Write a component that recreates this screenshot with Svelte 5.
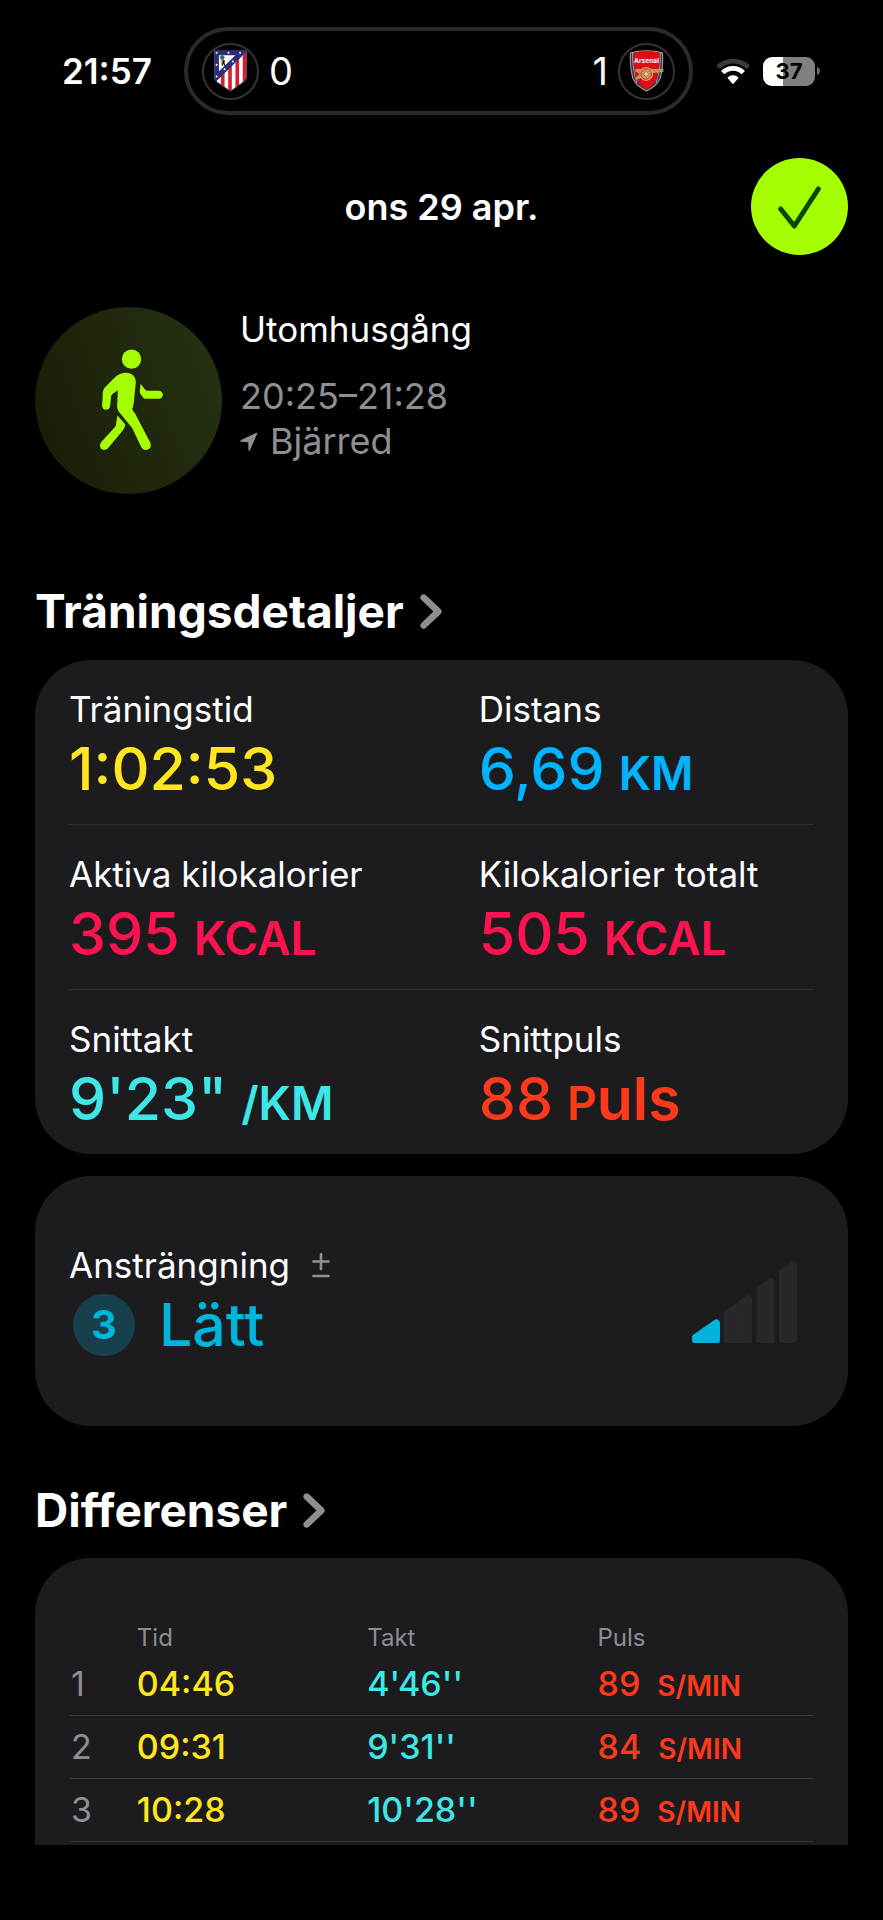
<script>
  const metrics = [
    { label: 'Träningstid', value: '1:02:53', tone: 'yellow' },
    { label: 'Distans', value: '6,69', unit: 'KM', tone: 'blue' },
    { label: 'Aktiva kilokalorier', value: '395', unit: 'KCAL', tone: 'pink' },
    { label: 'Kilokalorier totalt', value: '505', unit: 'KCAL', tone: 'pink' },
    { label: 'Snittakt', value: '9\'23"', unit: '/KM', tone: 'cyan' },
    { label: 'Snittpuls', value: '88', unit: 'P', unitTail: 'uls', tone: 'red' }
  ];
  const rows = [metrics.slice(0, 2), metrics.slice(2, 4), metrics.slice(4, 6)];

  const splits = [
    { n: 1, time: '04:46', pace: "4'46''", pulse: 89 },
    { n: 2, time: '09:31', pace: "9'31''", pulse: 84 },
    { n: 3, time: '10:28', pace: "10'28''", pulse: 89 }
  ];
</script>

{#snippet chevron()}
  <svg class="chevron" viewBox="0 0 66 106" aria-hidden="true">
    <path d="M11 11 L55 53 L11 95" fill="none" stroke="#8e8e93" stroke-width="20" stroke-linecap="round" stroke-linejoin="round" />
  </svg>
{/snippet}

<div class="screen">
  <div class="status">
    <span class="clock">21:57</span>
    <div class="island">
      <span class="team">
        <svg class="crest" viewBox="0 0 106 126" role="img" aria-label="Atlético Madrid">
          <defs>
            <clipPath id="atm"><path d="M4 1 H102 V84 Q100 92 92 97 L53 125 L12 97 Q4 92 4 84 Z" /></clipPath>
          </defs>
          <g clip-path="url(#atm)">
            <rect width="106" height="126" fill="#fff" />
            <g fill="#d7202c">
              <rect x="24" y="20" width="11" height="106" />
              <rect x="46" y="20" width="11" height="106" />
              <rect x="68" y="20" width="11" height="106" />
              <rect x="90" y="0" width="12" height="126" />
            </g>
            <path d="M0 0 H106 L8 96 H0 Z" fill="#2b2f77" />
            <path d="M18 15 H68 L18 64 Z" fill="#fff" />
            <circle cx="28" cy="22" r="7" fill="#1d7a4a" />
            <path d="M26 26 h3 v20 h-3 Z" fill="#6b4a2a" />
            <path d="M30 29 l6 2 l-1 8 l3 8 h-4 l-3 -6 l-2 6 h-2 l2 -12 Z" fill="#15151c" />
            <g fill="#fff">
              <circle cx="11" cy="8" r="3" /><circle cx="47" cy="8" r="3" /><circle cx="82" cy="8" r="3" />
              <circle cx="11" cy="44" r="3" /><circle cx="11" cy="80" r="3" />
              <circle cx="60" cy="34" r="3" /><circle cx="35" cy="58" r="3" />
            </g>
            <path d="M4 1 H102 V84 Q100 92 92 97 L53 125 L12 97 Q4 92 4 84 Z" fill="none" stroke="#2b2f77" stroke-width="4" />
          </g>
        </svg>
      </span>
      <span class="score">0</span>
      <span class="score right">1</span>
      <span class="team">
        <svg class="crest" viewBox="0 0 106 126" role="img" aria-label="Arsenal">
          <path d="M3 7 Q53 -6 103 7 Q106 50 96 86 Q84 112 53 125 Q22 112 10 86 Q0 50 3 7 Z" fill="#c9a466" />
          <path d="M6 9 Q53 -3 100 9 Q103 50 93 85 Q82 109 53 121 Q24 109 13 85 Q3 50 6 9 Z" fill="#1c3a70" />
          <path d="M11 8 Q10 60 24 98 M95 8 Q96 60 82 98" fill="none" stroke="#e8e2dc" stroke-width="2" />
          <path d="M14 8 Q53 -3 92 8 Q95 50 86 84 Q76 106 53 119 Q30 106 20 84 Q11 50 14 8 Z" fill="#e20a17" />
          <text x="53" y="38" text-anchor="middle" font-size="20" font-weight="700" fill="#fff">Arsenal</text>
          <path d="M20 56 L40 58 L104 56 V66 L70 70 L22 90 L18 84 L34 72 L18 64 Z" fill="#b39a5b" />
          <circle cx="52" cy="72" r="21" fill="#c6ab6a" />
          <circle cx="52" cy="72" r="16" fill="none" stroke="#d2332c" stroke-width="3" />
          <path d="M52 56 V88 M36 72 H68 M41 61 L63 83 M63 61 L41 83" stroke="#d2332c" stroke-width="2" />
          <circle cx="52" cy="72" r="5" fill="#e9d7a6" />
        </svg>
      </span>
    </div>
    <div class="indicators">
      <svg class="wifi" viewBox="0 0 102 78" role="img" aria-label="Wi-Fi">
        <path d="M5 28 A66 66 0 0 1 97 28" fill="none" stroke="#3a3a3a" stroke-width="14" />
        <path d="M20 44 A44 44 0 0 1 82 44" fill="none" stroke="#fff" stroke-width="14" />
        <path d="M34 59 A24 24 0 0 1 68 59 L54 76 Q51 79 48 76 Z" fill="#fff" />
      </svg>
      <span class="battery">37</span>
      <svg class="nub" viewBox="0 0 3 8" aria-hidden="true"><path d="M0 0 Q3 1 3 4 Q3 7 0 8 Z" fill="#6c6c6c" /></svg>
    </div>
  </div>

  <header class="top">
    <h1>ons 29 apr.</h1>
    <button class="done" aria-label="Klar">
      <svg viewBox="0 0 291 291" aria-hidden="true">
        <path d="M89 153 L130 204 L202 93" fill="none" stroke="#044a04" stroke-width="15" stroke-linecap="round" stroke-linejoin="round" />
      </svg>
    </button>
  </header>

  <main>
    <section class="workout">
      <div class="badge">
        <svg viewBox="45 52 560 560" role="img" aria-label="Gång">
          <g fill="#a6ff00">
            <circle cx="334" cy="208" r="29" />
            <path d="M318 249 C335 249 347 260 347 277 L341 335 C340 345 339 352 336 357 C337 362 341 366 345 372 L390 458 C394 467 391 476 383 479 C375 482 367 479 363 471 L336 414 L298 368 C293 362 291 356 291 348 L293 301 L279 311 C274 315 272 320 272 328 L270 348 C269 355 265 360 258 360 C251 360 246 355 246 347 L248 312 C248 303 251 296 257 290 L283 264 C293 254 305 249 318 249 Z" />
            <path d="M361 282 L374 298 C377 301 380 303 385 303 L415 303 C422 303 428 308 428 315 C428 322 422 327 415 327 L379 327 C374 327 371 326 368 322 L360 311 C359 309 359 307 359 304 Z" />
            <path d="M292 377 L315 403 C315 410 313 414 309 420 L264 474 C259 480 250 482 244 477 C238 472 238 463 243 457 L284 412 C287 408 288 404 288 400 Z" />
          </g>
        </svg>
      </div>
      <div class="about">
        <p class="kind">Utomhusgång</p>
        <p class="muted">20:25–21:28</p>
        <p class="muted place">
          <svg viewBox="0 0 56 60" aria-hidden="true">
            <path d="M54 3 Q55 1 52 1 L3 24 Q-1 27 3 29 L24 31 Q26 31 26 33 L26 55 Q28 60 31 56 Z" fill="#8e8e93" />
          </svg>
          Bjärred
        </p>
      </div>
    </section>

    <h2 class="first"><a href="#detaljer">Träningsdetaljer {@render chevron()}</a></h2>
    <section class="card" id="detaljer">
      {#each rows as row}
        <div class="row">
          {#each row as m}
            <div>
              <p class="label">{m.label}</p>
              <p class="value {m.tone}">
                {m.value}{#if m.unit}<span class="unit">{m.unit}</span>{/if}{#if m.unitTail}<span class="tail">{m.unitTail}</span>{/if}
              </p>
            </div>
          {/each}
        </div>
      {/each}
    </section>

    <section class="card effort">
      <div>
        <p class="label">
          Ansträngning
          <svg class="plusminus" viewBox="0 0 54 76" aria-hidden="true">
            <path d="M4 26 H50 M27 4 V49 M4 70 H50" stroke="#8e8e93" stroke-width="8" stroke-linecap="round" />
          </svg>
        </p>
        <p class="value level"><span class="num">3</span>Lätt</p>
      </div>
      <svg class="bars" viewBox="756 840 318 246" role="img" aria-label="Ansträngningsnivå">
        <g stroke-width="16" stroke-linejoin="round">
          <path d="M764 1068 L829 1023 L832 1026 V1078 H764 Z" fill="#00b4dc" stroke="#00b4dc" />
          <g fill="#28282c" stroke="#28282c">
            <path d="M860 997 L925 950 L928 953 V1078 H860 Z" />
            <path d="M957 924 L993 900 L996 903 V1078 H957 Z" />
            <path d="M1025 874 L1061 849 L1064 852 V1078 H1025 Z" />
          </g>
        </g>
      </svg>
    </section>

    <h2><a href="#differenser">Differenser {@render chevron()}</a></h2>
    <section class="card splits" id="differenser">
      <table>
        <thead>
          <tr><td class="idx"></td><th scope="col">Tid</th><th scope="col">Takt</th><th scope="col" class="last">Puls</th></tr>
        </thead>
        <tbody>
          {#each splits as s}
            <tr>
              <th scope="row">{s.n}</th>
              <td class="yellow">{s.time}</td>
              <td class="cyan">{s.pace}</td>
              <td class="red">{s.pulse}<span class="small-unit">S/MIN</span></td>
            </tr>
          {/each}
        </tbody>
      </table>
    </section>
  </main>
</div>

<style>
  :global(body) { background: #000; }
  .screen {
    font-family: Inter, "Liberation Sans", sans-serif;
    color: #fff;
    background: #000;
    padding: 27px 0 75px;
  }
  p, h1, h2 { margin: 0; font-weight: 400; }
  svg { display: block; flex: none; }

  .status {
    display: grid;
    grid-template-columns: 184px 1fr 190px;
    align-items: center;
  }
  .clock { padding-left: 62px; font-size: 35px; font-weight: 600; }
  .island {
    box-sizing: border-box;
    height: 88px;
    border: 4px solid #2a2a2a;
    border-radius: 44px;
    padding: 0 14px;
    display: flex;
    align-items: center;
    gap: 10px;
  }
  .team {
    box-sizing: border-box;
    width: 57px;
    height: 57px;
    border: 2px solid #333;
    border-radius: 50%;
    display: grid;
    place-items: center;
  }
  .crest { width: 35px; height: 42px; }
  .score { font-size: 38px; }
  .right { margin-left: auto; }
  .indicators { display: flex; align-items: center; padding-left: 23px; }
  .wifi { width: 34px; height: 26px; }
  .battery {
    margin-left: 13px;
    width: 52px;
    height: 29px;
    border-radius: 9px;
    background: linear-gradient(90deg, #fff 38%, #808080 38%);
    color: #000;
    font-size: 22px;
    font-weight: 700;
    line-height: 29px;
    text-align: center;
  }
  .nub { width: 3px; height: 8px; margin-left: 2px; }

  .top {
    display: grid;
    grid-template-columns: 97px 1fr 97px;
    align-items: center;
    padding: 43px 35px 0;
  }
  h1 { grid-column: 2; font-size: 36px; font-weight: 600; text-align: center; }
  .done {
    width: 97px;
    height: 97px;
    border: 0;
    border-radius: 50%;
    padding: 0;
    background: #a6ff00;
  }

  main { padding: 52px 35px 0; }
  .workout { display: flex; gap: 18px; }
  .badge {
    flex: none;
    width: 187px;
    height: 187px;
    border-radius: 50%;
    background: linear-gradient(70deg, #171d06, #273213);
  }
  .about { font-size: 36px; line-height: 45px; }
  .kind { margin-bottom: 22px; font-size: 35px; }
  .muted { color: #8e8e93; }
  .place { display: flex; align-items: center; gap: 12px; }
  .place svg { width: 18px; height: 20px; }

  h2 { margin: 56px 0 20px; font-size: 46px; line-height: 56px; font-weight: 700; }
  h2.first { margin: 89px 0 21px; }
  h2 a { display: flex; align-items: center; gap: 16px; color: inherit; text-decoration: none; }
  .chevron { width: 22px; height: 35px; }

  .card { background: #1c1c1e; border-radius: 56px; padding: 0 34px; }
  .row {
    display: grid;
    grid-template-columns: 55% 1fr;
    padding: 26px 0 18px;
    border-bottom: 1px solid #2d2d30;
  }
  .row:last-child { border-bottom: 0; }
  .label { font-size: 35px; line-height: 46px; }
  .value { font-size: 59px; line-height: 74px; font-weight: 500; white-space: nowrap; }
  .unit { margin-left: 14px; font-size: 46px; line-height: 46px; font-weight: 600; }
  .tail { font-weight: 600; }
  .yellow { color: #ffe620; }
  .blue { color: #00b4ff; }
  .pink { color: #ff1250; }
  .cyan { color: #3ee6e6; }
  .red { color: #ff3a1c; }

  .effort {
    margin-top: 22px;
    padding: 66px 50px 64px 34px;
    display: flex;
    justify-content: space-between;
    align-items: center;
  }
  .effort .label { display: flex; align-items: center; gap: 22px; }
  .plusminus { width: 18px; height: 25px; }
  .level { display: flex; align-items: center; gap: 24px; color: #00b4dc; }
  .num {
    margin-left: 4px;
    width: 62px;
    height: 62px;
    border-radius: 50%;
    background: #16414c;
    font-size: 40px;
    font-weight: 700;
    line-height: 62px;
    text-align: center;
  }
  .bars { width: 106px; height: 82px; }

  .splits { border-radius: 56px 56px 0 0; padding: 64px 35px 3px; }
  table { width: 100%; table-layout: fixed; border-collapse: collapse; text-align: left; }
  th, td { padding: 0; font-weight: 400; }
  .idx { width: 9%; }
  .last { width: 29%; }
  thead th { height: 31px; font-size: 24px; line-height: 30px; color: #8e8e93; }
  tbody tr { border-bottom: 1px solid #3a3a3d; }
  tbody th, tbody td { height: 62px; font-size: 34px; line-height: 42px; white-space: nowrap; }
  tbody th { padding-left: 1px; color: #8e8e93; }
  tbody td { font-weight: 500; }
  .small-unit { margin-left: 17px; font-size: 28px; line-height: 28px; font-weight: 600; }
</style>
